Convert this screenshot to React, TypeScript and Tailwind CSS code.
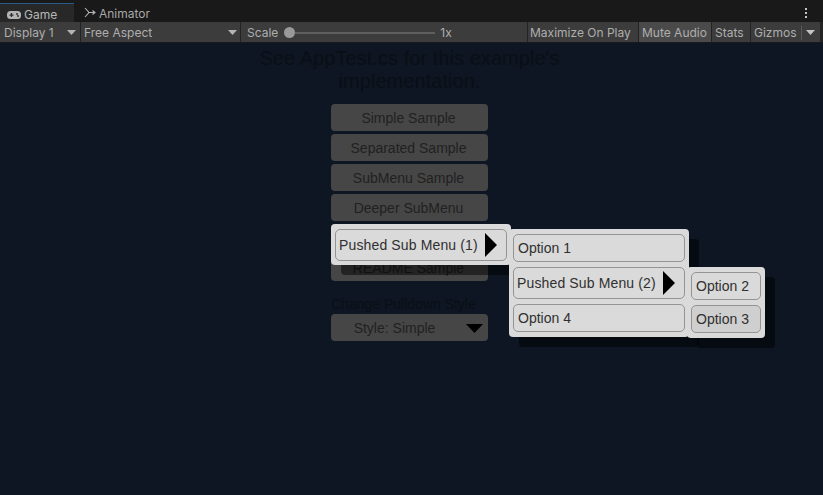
import React from 'react';

const samples = ['Simple Sample', 'Separated Sample', 'SubMenu Sample', 'Deeper SubMenu', 'Pushed Sub Menu', 'README Sample'];

function Arrow() {
    return (
        <svg width="12" height="24" viewBox="0 0 12 24" className="absolute right-[9px] top-1/2 -translate-y-1/2">
            <polygon points="0,0 12,12 0,24" fill="#000" />
        </svg>
    );
}

function Caret({ color = '#b4b4b4', w = 9, h = 5 }: { color?: string; w?: number; h?: number }) {
    return (
        <svg width={w} height={h} viewBox="0 0 9 5">
            <polygon points="0,0 9,0 4.5,5" fill={color} />
        </svg>
    );
}

function MenuItem({ label, h, pushed, arrow, pressed }: { label: string; h: string; pushed?: boolean; arrow?: boolean; pressed?: boolean }) {
    return (
        <div className={`relative flex items-center rounded-[5px] border border-[#949494] text-[14px] text-[#303030] ${h} ${pressed ? 'bg-[#cfcfcf]' : 'bg-[#dadada]'} ${pushed ? 'pl-[3px] tracking-[0.14px]' : 'pl-[4px]'}`}>
            {label}
            {arrow && <Arrow />}
        </div>
    );
}

function Panel({ className, children }: { className: string; children: React.ReactNode }) {
    return (
        <div className={`absolute ${className}`}>
            <div className="absolute left-[10px] top-[10px] w-full h-full rounded-[4px] bg-black/50" />
            <div className="relative h-full flex flex-col rounded-[4px] bg-[#dadada] px-[4px] pt-[5px]">
                {children}
            </div>
        </div>
    );
}

export default function App() {
    return (
        <div className="w-[823px] h-[495px] overflow-hidden relative flex flex-col bg-[#0d1622] font-['Liberation_Sans',sans-serif]">
            {/* Tab strip */}
            <div className="h-[22px] pt-[3px] flex bg-[#191919] font-['Inter',sans-serif] text-[12px] text-[#a8a8a8] shrink-0">
                <div className="w-[74px] bg-[#282828] border-t border-[#2a5a8a] flex items-center pt-[3px] pl-[7px] gap-[3px] text-[#b8b8b8]">
                    <svg width="14" height="10" viewBox="0 0 14 10">
                        <rect x="0" y="1" width="14" height="8" rx="3.5" fill="#b4b4b4" />
                        <rect x="2.5" y="4.5" width="4" height="1.2" fill="#282828" />
                        <rect x="3.9" y="3" width="1.2" height="4" fill="#282828" />
                        <circle cx="10" cy="4" r="0.9" fill="#282828" />
                        <circle cx="11" cy="6" r="0.9" fill="#282828" />
                    </svg>
                    <span>Game</span>
                </div>
                <div className="flex items-center pl-[10px] pt-[3px] gap-[3px]">
                    <svg width="12" height="11" viewBox="0 0 12 11" fill="none" stroke="#b4b4b4" strokeWidth="1.1" className="-mt-[3px]">
                        <path d="M1 1 L5 5.5 L1 10 M4 5.5 H11 M8.5 3.5 L11 5.5 L8.5 7.5" />
                    </svg>
                    <span>Animator</span>
                </div>
                <div className="ml-auto w-[34px] flex flex-col items-center justify-center gap-[2px] pr-[1px]">
                    <span className="w-[2px] h-[2px] bg-[#c4c4c4]" />
                    <span className="w-[2px] h-[2px] bg-[#c4c4c4]" />
                    <span className="w-[2px] h-[2px] bg-[#c4c4c4]" />
                </div>
            </div>

            {/* Toolbar */}
            <div className="h-[21px] flex bg-[#3c3c3c] border-b border-[#191919] font-['Inter',sans-serif] text-[12px] text-[#aeaeae] shrink-0">
                <div className="w-[81px] flex items-center justify-between pt-[1px] pl-[4px] pr-[4px] border-r border-[#232323]">
                    <span>Display 1</span>
                    <Caret />
                </div>
                <div className="w-[160px] flex items-center justify-between pt-[1px] pl-[3px] pr-[3px] border-r border-[#232323]">
                    <span>Free Aspect</span>
                    <Caret />
                </div>
                <div className="flex-1 flex items-center pt-[1px] pl-[6px]">
                    <span>Scale</span>
                    <span className="ml-[6px] w-[11px] h-[11px] rounded-full bg-[#999999]" />
                    <span className="h-[2px] w-[140px] bg-[#5e5e5e]" />
                    <span className="ml-[5px]">1x</span>
                </div>
                <div className="w-[111px] flex items-center pt-[1px] pl-[2px] border-l border-[#232323]">Maximize On Play</div>
                <div className="w-[73px] flex items-center pt-[1px] pl-[3px] bg-[#4a4a4a] border-l border-[#232323]">Mute Audio</div>
                <div className="w-[39px] flex items-center pt-[1px] pl-[3px] border-l border-[#232323]">Stats</div>
                <div className="w-[70px] flex items-center pt-[1px] border-l border-[#232323] pl-[3px] pr-[5px] justify-between">
                    <span>Gizmos</span>
                    <span className="h-[14px] border-l border-[#5a5a5a] ml-auto mr-[4px]" />
                    <Caret color="#c4c4c4" />
                </div>
                <div className="w-[3px] bg-[#232323]" />
            </div>

            {/* Game view */}
            <div className="flex-1 relative flex flex-col items-center pr-[4px]">
                <div className="w-[320px] mt-[4px] text-center text-[20px] leading-[23px] tracking-[0.05px] text-[#0a0f16]">
                    See AppTest.cs for this example's implementation.
                </div>
                <div className="mt-[11px] w-[157px] flex flex-col gap-[3px] text-[14px] text-[#212121]">
                    {samples.map(s => (
                        <div key={s} className="h-[27px] pt-[1px] pr-[2px] rounded-[4px] bg-[#464646] flex items-center justify-center">{s}</div>
                    ))}
                </div>
                <div className="mt-[14px] w-[157px] text-[14px] leading-[19px] text-[#0a0f16] whitespace-nowrap">Change Pulldown Style</div>
                <div className="w-[157px] h-[27px] pt-[1px] rounded-[4px] bg-[#464646] relative flex items-center justify-center pr-[30px] text-[14px] text-[#212121]">
                    Style: Simple
                    <svg width="17" height="9" viewBox="0 0 17 9" className="absolute right-[5px] top-[10px]">
                        <polygon points="0,0 17,0 8.5,9" fill="#000" />
                    </svg>
                </div>

                {/* Popup menus */}
                <Panel className="left-[331px] top-[181px] w-[180px] h-[41px]">
                    <MenuItem label="Pushed Sub Menu (1)" h="h-[32px]" pushed arrow />
                </Panel>
                <Panel className="left-[509px] top-[186px] w-[180px] h-[108px]">
                    <div className="flex flex-col gap-[5px]">
                        <MenuItem label="Option 1" h="h-[28px]" />
                        <MenuItem label="Pushed Sub Menu (2)" h="h-[32px]" pushed arrow />
                        <MenuItem label="Option 4" h="h-[28px]" />
                    </div>
                </Panel>
                <Panel className="left-[687px] top-[224px] w-[78px] h-[71px]">
                    <div className="flex flex-col gap-[5px]">
                        <MenuItem label="Option 2" h="h-[28px]" />
                        <MenuItem label="Option 3" h="h-[28px]" pressed />
                    </div>
                </Panel>
            </div>
        </div>
    );
}
